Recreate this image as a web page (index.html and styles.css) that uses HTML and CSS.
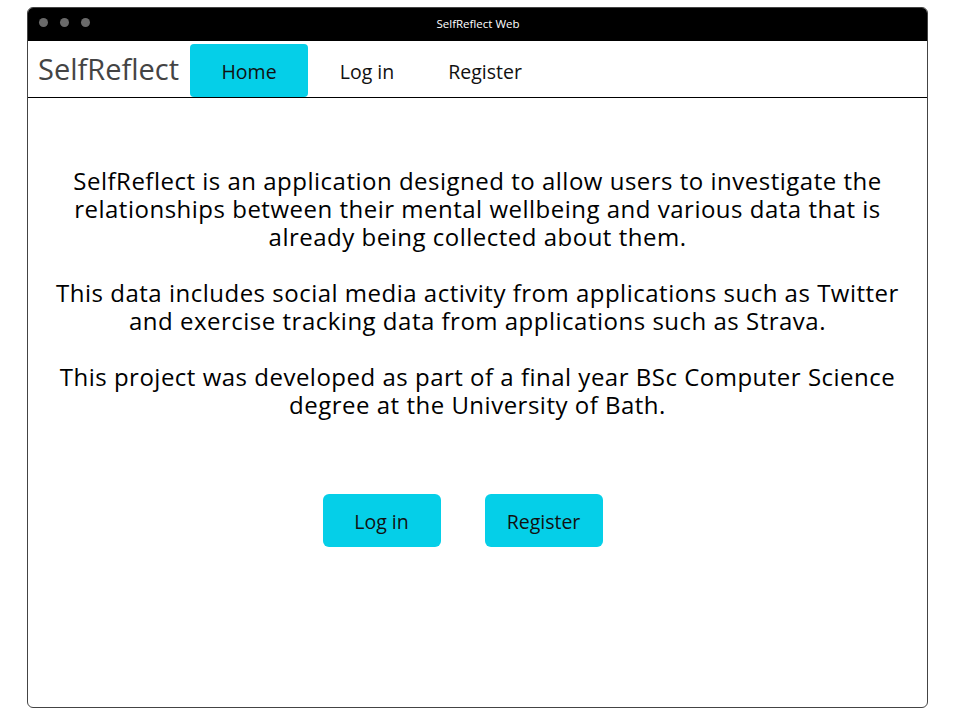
FILE: index.html
```html
<!DOCTYPE html>
<html lang="en">
<head>
<meta charset="utf-8">
<title>SelfReflect Web</title>
<link rel="stylesheet" href="styles.css">
</head>
<body>
<div class="window">
  <div class="titlebar">
    <div class="dots"><span class="dot"></span><span class="dot"></span><span class="dot"></span></div>
    <div class="title">SelfReflect Web</div>
  </div>
  <nav class="nav">
    <div class="brand">SelfReflect</div>
    <a class="tab active">Home</a>
    <a class="tab">Log in</a>
    <a class="tab">Register</a>
  </nav>
  <main class="content">
    <p>SelfReflect is an application designed to allow users to investigate the relationships between their mental wellbeing and various data that is already being collected about them.</p>
    <p>This data includes social media activity from applications such as Twitter and exercise tracking data from applications such as Strava.</p>
    <p>This project was developed as part of a final year BSc Computer Science degree at the University of Bath.</p>
    <div class="actions">
      <a class="btn">Log in</a>
      <a class="btn">Register</a>
    </div>
  </main>
</div>
</body>
</html>
```
FILE: styles.css
```css
html, body {
  margin: 0;
  background: #ffffff;
}
body {
  padding: 7px 0 0 27px;
  font-family: "Open Sans", "Noto Sans", sans-serif;
}
.window {
  box-sizing: border-box;
  width: 901px;
  height: 701px;
  border: 1px solid #444;
  border-radius: 6px;
  overflow: hidden;
  display: flex;
  flex-direction: column;
}
.titlebar {
  height: 33px;
  background: #000;
  position: relative;
  display: flex;
  align-items: center;
  justify-content: center;
}
.dots {
  position: absolute;
  left: 11px;
  top: 10px;
  display: flex;
  gap: 12px;
}
.dot {
  width: 9px;
  height: 9px;
  border-radius: 50%;
  background: #6a6a6a;
}
.title {
  color: #fff;
  font-size: 11.5px;
  padding-left: 1px;
  padding-bottom: 2px;
}
.nav {
  height: 56px;
  border-bottom: 1px solid #000;
  display: flex;
  align-items: flex-end;
  padding-left: 10px;
}
.brand {
  font-size: 29px;
  color: #444;
  align-self: center;
  margin-right: 11px;
  padding-bottom: 2px;
}
.tab {
  width: 118px;
  height: 53px;
  display: flex;
  align-items: center;
  justify-content: center;
  font-size: 19.5px;
  color: #111;
  border-radius: 4px 4px 0 0;
  padding-top: 2px;
  box-sizing: border-box;
}
.tab.active {
  background: #05cfe8;
  border-radius: 4px;
}
.content {
  flex: 1;
  padding: 69px 20px 0 20px;
  text-align: center;
  color: #000;
}
.content p {
  margin: 0 0 28px 0;
  font-size: 24px;
  line-height: 28px;
  letter-spacing: 0.5px;
}
.actions {
  display: flex;
  justify-content: center;
  gap: 44px;
  margin-top: 75px;
  padding-right: 30px;
}
.btn {
  width: 118px;
  height: 53px;
  background: #05cfe8;
  border-radius: 6px;
  display: flex;
  align-items: center;
  justify-content: center;
  font-size: 19.5px;
  color: #111;
  padding-top: 1px;
  box-sizing: border-box;
}
```
